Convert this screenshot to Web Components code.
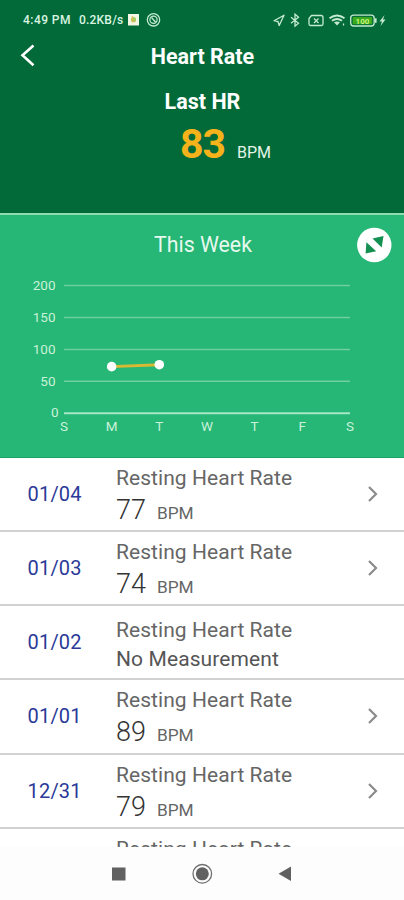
<!DOCTYPE html>
<html lang="en">
<head>
<meta charset="utf-8">
<meta name="viewport" content="width=device-width, initial-scale=1">
<title>Heart Rate</title>
<style>
  body {
    margin: 0;
    font-family: Roboto, "Liberation Sans", sans-serif;
    background: #fff;
  }
</style>
</head>
<body>
<heart-rate-app></heart-rate-app>

<script>
class StatusBar extends HTMLElement {
  constructor() {
    super();
    this.root = this.attachShadow({ mode: "open" });
    this.root.innerHTML = /* html */ `
      <style>
        :host {
          display: flex;
          align-items: center;
          height: 40px;
          padding: 0 16px 0 23px;
          color: #d9f5e2;
          font-size: 12px;
          line-height: 14px;
          font-weight: 500;
        }
        .time { width: 56px; letter-spacing: 0.45px; white-space: nowrap; }
        .speed { width: 48px; white-space: nowrap; letter-spacing: 0.2px; }
        .spacer { flex: 1; }
        svg { display: block; flex: none; }
      </style>
      <span class="time">4:49 PM</span>
      <span class="speed">0.2KB/s</span>
      <svg width="36" height="16" viewBox="0 0 36 16" fill="none">
        <rect x="1" y="2" width="11" height="11.5" fill="#f3f7e4"/>
        <circle cx="6.5" cy="7.7" r="2.6" fill="#a9cf63"/>
        <path d="M5.4 4v5.5h2.4" stroke="#e9b44c"/>
        <circle cx="26.5" cy="7.8" r="6.2" stroke="#c5ead2" stroke-width="1.3"/>
        <circle cx="26.5" cy="7.8" r="3.6" stroke="#c5ead2" stroke-width="1.2"/>
        <path d="M24.5 5.5l4.5 5" stroke="#c5ead2" stroke-width="1.3"/>
      </svg>
      <span class="spacer"></span>
      <svg width="116" height="16" viewBox="272 12 116 16" fill="none" stroke="#c5ead2" stroke-width="1.3">
        <path d="M284 15.2l-10 5.5 4 .8 1.200 4z" stroke-linejoin="round"/>
        <path d="M291 17.200l7.500 6-3.500 3V14.200l3.500 3-7.500 6"/>
        <path d="M311.500 15.500h9.500q2 0 2 2v6.500q0 1.500-1.500 1.500h-11q-1.500 0-1.500-1.500v-5.500z"/>
        <path d="M314 18.500l4.500 4.500M318.500 18.500l-4.500 4.500"/>
        <path d="M329.500 18.300q7.500-5.500 15 0M332 20.800q5-3.500 10 0" stroke-width="1.900"/>
        <path d="M334 22.300q3-1.500 6 0l-3 3.200z" fill="#c5ead2" stroke="none"/>
        <path d="M343.500 23.500v2" />
        <rect x="350.700" y="15.200" width="23.500" height="10.800" rx="3"/>
        <rect x="352.700" y="17" width="19.500" height="7.200" rx="1" fill="#3aa91d" stroke="none"/>
        <path d="M375.700 18.300v4.500" stroke-width="1.800"/>
        <text x="362.500" y="23.600" text-anchor="middle" font-size="8" font-weight="700" fill="#c4f57c" stroke="none">100</text>
        <path d="M384.500 15l-5 6.500h2.500l-1.500 4.500 5-6.500h-2.500z" fill="#c5ead2" stroke="none"/>
      </svg>
    `;
  }
}
customElements.define("status-bar", StatusBar);

class TitleBar extends HTMLElement {
  constructor() {
    super();
    this.root = this.attachShadow({ mode: "open" });
    this.root.innerHTML = /* html */ `
      <style>
        :host {
          display: grid;
          grid-template-columns: 52px 1fr 52px;
          align-items: center;
          height: 32px;
          color: #fff;
          text-align: center;
          font-size: 21.500px;
          line-height: 26px;
          font-weight: 700;
        }
        svg { display: block; margin-left: 18px; }
        .title { padding: 1px 0 0 1px; }
      </style>
      <svg width="20" height="24" viewBox="0 0 20 24" fill="none" stroke="#fff" stroke-width="2.600">
        <path d="M15.500 1.500L4.500 11.300l11 10"/>
      </svg>
      <div class="title"><slot></slot></div>
    `;
  }
}
customElements.define("title-bar", TitleBar);

class LastReading extends HTMLElement {
  constructor() {
    super();
    this.root = this.attachShadow({ mode: "open" });
    this.root.innerHTML = /* html */ `
      <style>
        :host {
          display: block;
          height: 141px;
          color: #fff;
        }
        .label {
          padding: 17px 0 0 1px;
          text-align: center;
          font-size: 21.500px;
          line-height: 26px;
          font-weight: 700;
        }
        .reading {
          display: flex;
          align-items: baseline;
          gap: 12px;
          padding: 5px 0 0 180px;
        }
        .value {
          color: #f6b21b;
          font-size: 41px;
          line-height: 48px;
          font-weight: 700;
          letter-spacing: -1px;
        }
        .unit { font-size: 16px; color: #e3f4e8; }
      </style>
      <div class="label"><slot name="label"></slot></div>
      <div class="reading">
        <span class="value"><slot name="value"></slot></span>
        <span class="unit"><slot name="unit"></slot></span>
      </div>
    `;
  }
}
customElements.define("last-reading", LastReading);

class WeekChart extends HTMLElement {
  constructor() {
    super();
    this.root = this.attachShadow({ mode: "open" });
  }

  connectedCallback() {
    const days = ["S", "M", "T", "W", "T", "F", "S"];
    const readings = [null, 73, 76];
    const x = (i) => 64 + i * 47.65;
    const y = (v) => 198.2 - v * 0.638;

    const grid = [200, 150, 100, 50].map((v) => `
      <path d="M64 ${y(v)}H350" stroke="#6fd09d" stroke-width="1.500"/>
      <text x="55.500" y="${y(v) + 4.4}" text-anchor="end">${v}</text>`).join("");
    const labels = days.map((d, i) => `<text x="${x(i)}" y="216" text-anchor="middle">${d}</text>`).join("");
    const points = readings
      .map((v, i) => (v === null ? null : [x(i), y(v)]))
      .filter(Boolean);
    const dots = points.map((p) => `<circle cx="${p[0]}" cy="${p[1]}" r="4.800" fill="#fff"/>`).join("");

    this.root.innerHTML = /* html */ `
      <style>
        :host {
          display: block;
          box-sizing: border-box;
          height: 244.500px;
          border-top: 2px solid #8fdcb0;
          border-bottom: 1px solid #18a567;
          background: #26b675;
          color: #e6f9ee;
        }
        .head {
          display: grid;
          grid-template-columns: 48px 1fr 48px;
          align-items: center;
          height: 60px;
        }
        h2 {
          grid-column: 2;
          margin: 0;
          padding-left: 2px;
          text-align: center;
          font-size: 21.300px;
          line-height: 26px;
          font-weight: 400;
        }
        svg { display: block; }
        .plot { margin-top: -60px; }
        text { font-size: 13.500px; fill: #c9f2da; }
      </style>
      <div class="head">
        <h2><slot></slot></h2>
        <svg width="36" height="36" viewBox="0 0 36 36">
          <circle cx="18.300" cy="18" r="17.200" fill="#fff"/>
          <path d="M27.500 9l-11 2.500 9.200 9zM9.600 26.500l.8-11.300 9.800 9z" fill="#149052"/>
        </svg>
      </div>
      <svg class="plot" width="404" height="240" viewBox="0 0 404 240" fill="none">
        ${grid}
        <path d="M64 ${y(0)}H350" stroke="#a5e8c4" stroke-width="2"/>
        <text x="58.500" y="${y(0) + 4}" text-anchor="end">0</text>
        ${labels}
        <polyline points="${points.join(" ")}" stroke="#d8b934" stroke-width="3"/>
        ${dots}
      </svg>
    `;
  }
}
customElements.define("week-chart", WeekChart);

class ReadingRow extends HTMLElement {
  constructor() {
    super();
    this.root = this.attachShadow({ mode: "open" });
  }

  connectedCallback() {
    const date = this.getAttribute("date");
    const value = this.getAttribute("value");
    let result = "";
    if (value) {
      result = `<div class="result"><span class="value">${value}</span><span class="unit">BPM</span></div>`;
    } else if (date) {
      result = `<div class="none">No Measurement</div>`;
    }
    const chevron = value
      ? `<svg width="12" height="18" viewBox="0 0 12 18" fill="none" stroke="#8b8b8b" stroke-width="2.200"><path d="M2 2l7 7-7 7"/></svg>`
      : "";

    this.root.innerHTML = /* html */ `
      <style>
        :host {
          display: grid;
          grid-template-columns: 116px 1fr 37px;
          box-sizing: border-box;
          height: 74.250px;
          border-bottom: 2px solid #d2d2d2;
          background: #fff;
          color: #666;
        }
        .date {
          align-self: center;
          padding-left: 27.500px;
          color: #2b3a98;
          font-size: 20px;
          line-height: 24px;
          letter-spacing: 0.200px;
        }
        .info { padding-top: 7px; white-space: nowrap; }
        .name {
          font-size: 21px;
          line-height: 26px;
          letter-spacing: 0.060px;
        }
        .result { display: flex; align-items: baseline; gap: 11px; }
        .value { color: #333; font-size: 27px; line-height: 39px; font-weight: 300; }
        .unit { font-size: 17.300px; }
        .info.empty { padding-top: 10.500px; }
        .none { color: #555; font-size: 21px; line-height: 32px; letter-spacing: 0.100px; }
        svg { display: block; align-self: center; }
      </style>
      <div class="date">${date || ""}</div>
      <div class="info${value || !date ? "" : " empty"}">
        <div class="name"><slot></slot></div>
        ${result}
      </div>
      ${chevron}
    `;
  }
}
customElements.define("reading-row", ReadingRow);

class NavBar extends HTMLElement {
  constructor() {
    super();
    this.root = this.attachShadow({ mode: "open" });
    this.root.innerHTML = /* html */ `
      <style>
        :host {
          display: flex;
          justify-content: center;
          align-items: flex-start;
          gap: 62px;
          box-sizing: border-box;
          height: 53px;
          padding-top: 15px;
          background: #fdfdfd;
        }
        svg { display: block; }
      </style>
      <svg width="22" height="24"><rect x="5" y="5.500" width="13.500" height="13" fill="#616161"/></svg>
      <svg width="22" height="24" fill="none" stroke="#707070"><circle cx="11.300" cy="11.800" r="9.300" stroke-width="1.300"/><circle cx="11.300" cy="11.800" r="6.500" fill="#616161" stroke="none"/></svg>
      <svg width="22" height="24"><path d="M16 4.500v14.500L3.500 11.800z" fill="#616161"/></svg>
    `;
  }
}
customElements.define("nav-bar", NavBar);

class HeartRateApp extends HTMLElement {
  constructor() {
    super();
    this.root = this.attachShadow({ mode: "open" });
    this.root.innerHTML = /* html */ `
      <style>
        :host {
          display: flex;
          flex-direction: column;
          width: 404px;
          height: 900px;
          overflow: hidden;
        }
        header { background: #016a38; }
        .list { flex: 1; min-height: 0; overflow: hidden; }
      </style>
      <header>
        <status-bar></status-bar>
        <title-bar>Heart Rate</title-bar>
        <last-reading>
          <span slot="label">Last HR</span>
          <span slot="value">83</span>
          <span slot="unit">BPM</span>
        </last-reading>
      </header>
      <week-chart>This Week</week-chart>
      <div class="list">
        <reading-row date="01/04" value="77">Resting Heart Rate</reading-row>
        <reading-row date="01/03" value="74">Resting Heart Rate</reading-row>
        <reading-row date="01/02">Resting Heart Rate</reading-row>
        <reading-row date="01/01" value="89">Resting Heart Rate</reading-row>
        <reading-row date="12/31" value="79">Resting Heart Rate</reading-row>
        <reading-row>Resting Heart Rate</reading-row>
      </div>
      <nav-bar></nav-bar>
    `;
  }
}
customElements.define("heart-rate-app", HeartRateApp);
</script>
</body>
</html>
